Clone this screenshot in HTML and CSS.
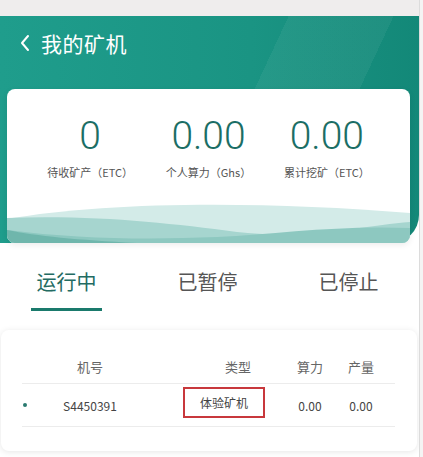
FILE: index.html
```html
<!DOCTYPE html>
<html lang="zh-CN">
<head>
    <meta charset="UTF-8">
    <meta name="viewport" content="width=device-width, initial-scale=1.0">
    <title>我的矿机</title>
    <link rel="stylesheet" href="styles.css">
</head>
<body>
    <div class="app">
        <div class="status-bar"></div>

        <div class="header">
            <div class="title-bar">
                <svg class="back" width="12" height="18" viewBox="0 0 12 18">
                    <path d="M9 2 L3 9 L9 16" fill="none" stroke="#fff" stroke-width="2" stroke-linecap="round" stroke-linejoin="round"/>
                </svg>
                <span class="title">我的矿机</span>
            </div>

            <div class="summary-card">
                <div class="stats">
                    <div class="stat">
                        <div class="stat-value">0</div>
                        <div class="stat-label">待收矿产（ETC）</div>
                    </div>
                    <div class="stat">
                        <div class="stat-value">0.00</div>
                        <div class="stat-label">个人算力（Ghs）</div>
                    </div>
                    <div class="stat">
                        <div class="stat-value">0.00</div>
                        <div class="stat-label">累计挖矿（ETC）</div>
                    </div>
                </div>
                <svg class="wave" width="403" height="40" viewBox="0 0 403 40" preserveAspectRatio="none">
                    <path d="M0 16 C100 -2 260 -2 403 10 L403 40 L0 40 Z" fill="#d3ebe8"/>
                    <path d="M0 15 C90 12 160 20 230 29 C300 37 360 22 403 19 L403 40 L0 40 Z" fill="#a6d5cf"/>
                    <path d="M0 27 C70 36 140 37 210 34 C270 31 330 22 403 25 L403 40 L0 40 Z" fill="#8dc8c0"/>
                    <path d="M0 27 C30 33 70 37 130 40 L0 40 Z" fill="#6fb6ac"/>
                </svg>
            </div>
        </div>

        <div class="tabs">
            <div class="tab active">运行中</div>
            <div class="tab">已暂停</div>
            <div class="tab">已停止</div>
        </div>

        <div class="list-card">
            <div class="row head">
                <span></span>
                <span>机号</span>
                <span class="type-head">类型</span>
                <span>算力</span>
                <span>产量</span>
            </div>
            <div class="row">
                <span class="dot"></span>
                <span>S4450391</span>
                <span class="type-cell"><span class="type-box">体验矿机</span></span>
                <span>0.00</span>
                <span>0.00</span>
            </div>
        </div>
    </div>
    <div class="scrollbar"></div>
</body>
</html>
```

FILE: styles.css
```css
body {
    margin: 0;
    padding: 0;
    display: flex;
    width: 423px;
    height: 457px;
    overflow: hidden;
    background: #f3f3f3;
    font-family: "Noto Sans CJK SC", "Noto Sans", sans-serif;
}
.app {
    width: 419px;
    background: #fff;
}
.scrollbar {
    width: 3px;
    border-left: 1px solid #dcdcdc;
    background: #f4f4f4;
}
.status-bar {
    height: 16px;
    background: #efeded;
}

/* teal header with the summary card hanging over its bottom */
.header {
    background:
        linear-gradient(115deg, rgba(255,255,255,0) 55%, rgba(255,255,255,0.05) 55%, rgba(255,255,255,0.05) 75%, rgba(255,255,255,0) 75%),
        linear-gradient(90deg, #1f9d8c, #1a9483 60%, #138878);
    border-bottom-right-radius: 28px;
    padding: 0 9px 0 7px;
}
.title-bar {
    height: 53px;
    display: flex;
    align-items: center;
    padding-left: 12px;
    color: #fff;
}
.back {
    margin-right: 10px;
}
.title {
    font-size: 21px;
    letter-spacing: 0.5px;
}
.summary-card {
    position: relative;
    margin-top: 20px;
    margin-bottom: -31px;
    height: 154px;
    background: #fff;
    border-radius: 8px;
    overflow: hidden;
    box-shadow: 0 2px 6px rgba(0, 0, 0, 0.08);
    display: flex;
    flex-direction: column;
    justify-content: space-between;
}
.stats {
    display: grid;
    grid-template-columns: repeat(3, 1fr);
    padding: 24px 24px 0;
}
.stat {
    text-align: center;
}
.stat-value {
    font-family: Roboto, sans-serif;
    font-weight: 300;
    font-size: 39px;
    line-height: 46px;
    color: #1b6e65;
}
.stat-label {
    margin-top: 5px;
    font-size: 11px;
    color: #555;
}
.wave {
    display: block;
}

/* tabs */
.tabs {
    display: grid;
    grid-template-columns: repeat(3, 141px);
    margin-left: -4px;
    padding: 56px 0 9px;
}
.tab {
    text-align: center;
    font-size: 20px;
    line-height: 28px;
    color: #555;
    padding-bottom: 15px;
}
.tab.active {
    color: #236b62;
    background: linear-gradient(#1a7a6c, #1a7a6c) no-repeat center bottom / 71px 3px;
    border-radius: 2px;
}

/* machine list */
.list-card {
    margin: 10px 2px 0 1px;
    padding: 20px 0 24px 21px;
    background: #fff;
    border-radius: 8px;
    box-shadow: 0 1px 6px rgba(0, 0, 0, 0.1);
}
.row {
    display: grid;
    grid-template-columns: 12px 112px 142px 44px 58px;
    width: 373px;
    align-items: center;
    height: 42px;
    border-bottom: 1px solid #ececec;
    font-size: 12px;
    color: #444;
    text-align: center;
}
.row.head {
    height: 33px;
    font-size: 13px;
    color: #666;
}
.type-head {
    padding-left: 42px;
}
.type-cell {
    padding-left: 14px;
}
.type-box {
    display: inline-block;
    padding: 0 15px;
    line-height: 27px;
    border: 2px solid #c8383c;
    margin-top: -6px;
}
.dot {
    width: 4px;
    height: 4px;
    border-radius: 50%;
    background: #2a7a70;
    margin-left: 1px;
}
```
